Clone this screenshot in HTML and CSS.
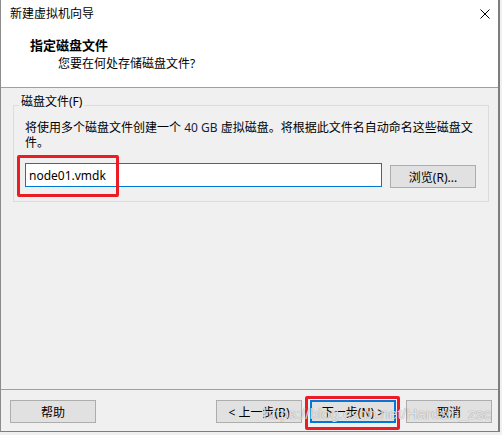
FILE: index.html
```html
<!DOCTYPE html>
<html lang="zh-CN">
<head>
    <meta charset="UTF-8">
    <meta name="viewport" content="width=device-width, initial-scale=1.0">
    <title>新建虚拟机向导</title>
    <link rel="stylesheet" href="styles.css">
</head>
<body>
    <div class="window">
        <div class="header">
            <div class="titlebar">
                <span class="title">新建虚拟机向导</span>
                <svg class="close" width="10" height="10" viewBox="0 0 10 10">
                    <path d="M0.5 0.5 L9.5 9.5 M9.5 0.5 L0.5 9.5" stroke="#000" stroke-width="1" fill="none"/>
                </svg>
            </div>
            <div class="heading">指定磁盘文件</div>
            <div class="subheading">您要在何处存储磁盘文件?</div>
        </div>

        <div class="content">
            <fieldset class="group">
                <legend>磁盘文件(F)</legend>
                <p class="desc">将使用多个磁盘文件创建一个 <span class="num">40 GB</span> 虚拟磁盘。将根据此文件名自动命名这些磁盘文件。</p>
                <div class="file-row">
                    <input class="file-input" type="text" value="node01.vmdk">
                    <button class="btn browse">浏览(R)...</button>
                </div>
            </fieldset>
        </div>

        <div class="footer">
            <button class="btn">帮助</button>
            <div class="spacer"></div>
            <button class="btn">&lt; 上一步(B)</button>
            <button class="btn focused">下一步(N) &gt;</button>
            <button class="btn cancel">取消</button>
        </div>

        <!-- annotations drawn over the screenshot -->
        <div class="mark mark-input"></div>
        <div class="mark mark-next"></div>
        <div class="watermark">https://blog.csdn.net/Hardsin_zsc</div>
    </div>
</body>
</html>
```

FILE: styles.css
```css
* {
    box-sizing: border-box;
}

body {
    margin: 0;
    background-color: #f0f0f0;
    font-family: "Noto Sans", "Noto Sans CJK SC", sans-serif;
    font-size: 12px;
    color: #000;
}

.window {
    position: relative;
    display: flex;
    flex-direction: column;
    width: 500px;
    height: 432px;
    background-color: #f0f0f0;
    border-left: 1px solid #8c8c8c;
    border-right: 2px solid #7d7d7d;
    border-bottom: 1px solid #7d7d7d;
}

.header {
    height: 88px;
    background-color: #fff;
    border-bottom: 1px solid #a0a0a0;
}

.titlebar {
    display: flex;
    align-items: center;
    justify-content: space-between;
    height: 30px;
    padding: 0 8px 2px 9px;
}

.title {
    line-height: 16px;
}

.heading {
    margin-top: 6px;
    padding-left: 29px;
    font-weight: bold;
    font-size: 13px;
    line-height: 18px;
}

.subheading {
    margin-top: 1px;
    padding-left: 57px;
    line-height: 18px;
}

.content {
    flex: 1;
    padding: 6px 9px 0 12px;
}

.group {
    margin: 0;
    padding: 4px 8px 13px 11px;
    border: 1px solid #dcdcdc;
}

.group legend {
    margin-left: -6px;
    padding: 0 2px 6px;
    line-height: 16px;
}

.desc {
    margin: 0;
    width: 454px;
    line-height: 15px;
}

.num {
    color: #1c1a3c;
}

.file-row {
    display: flex;
    gap: 8px;
    margin-top: 13px;
}

.file-input {
    width: 357px;
    height: 24px;
    margin: 0;
    padding: 0 3px;
    border: 1px solid #0078d7;
    outline: none;
    font-family: inherit;
    font-size: 12px;
    color: #000;
    background-color: #fff;
}

.btn {
    width: 86px;
    height: 23px;
    margin: 0;
    padding: 0;
    background-color: #e1e1e1;
    border: 1px solid #adadad;
    font-family: inherit;
    font-size: 12px;
    color: #000;
}

.browse {
    margin-top: 2px;
}

.footer {
    display: flex;
    gap: 8px;
    height: 42px;
    padding: 10px 6px 0 9px;
    border-top: 1px solid #a0a0a0;
}

.spacer {
    flex: 1;
}

.focused {
    border-color: #0078d7;
    box-shadow: inset 0 0 0 1px #0078d7;
}

.cancel {
    margin-left: 2px;
}

.mark {
    position: absolute;
    border: 3px solid #ec1c24;
    border-radius: 2px;
}

.mark-input {
    left: 16px;
    top: 155px;
    width: 102px;
    height: 42px;
}

.mark-next {
    left: 304px;
    top: 396px;
    width: 95px;
    height: 34px;
}

.watermark {
    position: absolute;
    left: 262px;
    top: 404px;
    font-family: "Liberation Sans", Arial, sans-serif;
    font-size: 15.5px;
    line-height: 20px;
    color: rgba(255, 255, 255, 0.8);
    text-shadow: 0 0 1px rgba(0, 0, 0, 0.5);
    white-space: nowrap;
}
```
